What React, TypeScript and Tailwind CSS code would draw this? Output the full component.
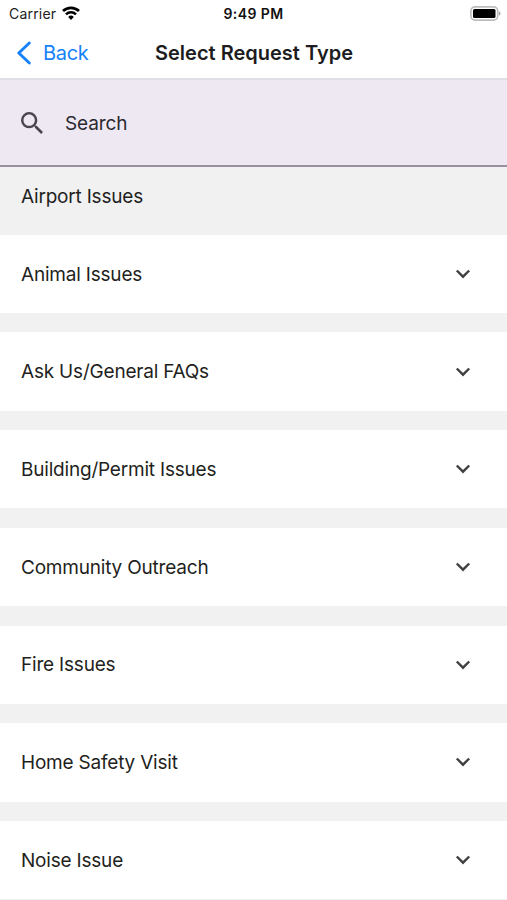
const groups = [
  'Animal Issues',
  'Ask Us/General FAQs',
  'Building/Permit Issues',
  'Community Outreach',
  'Fire Issues',
  'Home Safety Visit',
  'Noise Issue',
]

function StatusBar() {
  return (
    <div className="grid h-[26px] grid-cols-3 items-center pl-[9px] pr-[6px] text-black">
      <div className="flex items-center gap-[6px] text-[14px] tracking-[0.2px] text-[#222]">
        Carrier
        <svg className="h-[14px] w-[18px]" viewBox="0 0 18 14" aria-hidden>
          <path d="M1 5a11.6 11.6 0 0 1 16 0" fill="none" stroke="#000" strokeWidth="2.8" />
          <path d="M4 8.3a7.2 7.2 0 0 1 10 0" fill="none" stroke="#000" strokeWidth="2.5" />
          <path d="M9 14 6.2 10.9a4 4 0 0 1 5.6 0z" />
        </svg>
      </div>
      <div className="-ml-[3px] text-center text-[14px] font-semibold tracking-[0.4px] text-[#111]">9:49 PM</div>
      <svg className="h-[15px] w-[31px] justify-self-end" viewBox="0 0 31 15" aria-hidden>
        <rect x="0.9" y="0.9" width="26.8" height="13.2" rx="4" fill="none" stroke="#bdbdbd" strokeWidth="1.6" />
        <rect x="3" y="3" width="22.5" height="9" rx="1.5" />
        <path d="M28.8 5.3c2.3 1 2.3 3.4 0 4.4z" fill="#a5a5a5" />
      </svg>
    </div>
  )
}

export default function App() {
  return (
    <div className="h-[900px] w-[507px] overflow-hidden bg-[#f1f1f1] font-['Inter','Liberation_Sans',sans-serif] text-[#1f1f21]">
      <header className="h-[80px] border-b-2 border-[#e2dee6] bg-white">
        <StatusBar />
        <nav className="grid h-[53px] grid-cols-[1fr_auto_1fr] items-center px-4">
          <button type="button" className="flex items-center gap-3 text-[20px] tracking-[-0.3px] text-[#1582fb]">
            <svg className="h-6 w-[15px]" viewBox="0 0 15 24" aria-hidden>
              <path
                d="M13.3 2 2.8 12l10.5 10"
                fill="none"
                stroke="currentColor"
                strokeWidth="2.9"
                strokeLinecap="round"
                strokeLinejoin="round"
              />
            </svg>
            Back
          </button>
          <h1 className="pl-px text-[20px] font-semibold text-[#1c1c1e]">Select Request Type</h1>
        </nav>
      </header>
      <div className="flex h-[87px] items-center gap-[22px] border-b-2 border-[#96919d] bg-[#eee8f3] px-[21px] text-[19px] tracking-[-0.1px] text-[#2b2930]">
        <svg className="h-[22px] w-[22px]" viewBox="3 3 17.5 17.5" fill="#49454f" aria-hidden>
          <path d="M15.5 14h-.79l-.28-.27A6.471 6.471 0 0 0 16 9.5 6.5 6.5 0 1 0 9.5 16c1.61 0 3.09-.59 4.23-1.57l.27.28v.79l5 4.99L20.49 19l-4.99-5zm-6 0C7.01 14 5 11.99 5 9.5S7.01 5 9.5 5 14 7.01 14 9.5 11.99 14 9.5 14z" />
        </svg>
        <span className="pt-[3px]">Search</span>
      </div>
      <main className="text-[19px] tracking-[-0.2px]">
        <div className="flex h-[67.6px] items-center px-[21px] pb-2">Airport Issues</div>
        <div className="flex flex-col gap-[19.4px]">
          {groups.map((name) => (
            <div key={name} className="flex h-[78.35px] shrink-0 items-center justify-between bg-white pl-[21px] pr-[36px]">
              <span className="pt-[2px]">{name}</span>
              <svg className="h-[10px] w-4" viewBox="0 0 16 10" aria-hidden>
                <path d="m1.8 1.5 6.2 6.2 6.2-6.2" fill="none" stroke="#414143" strokeWidth="2.4" />
              </svg>
            </div>
          ))}
        </div>
      </main>
    </div>
  )
}
